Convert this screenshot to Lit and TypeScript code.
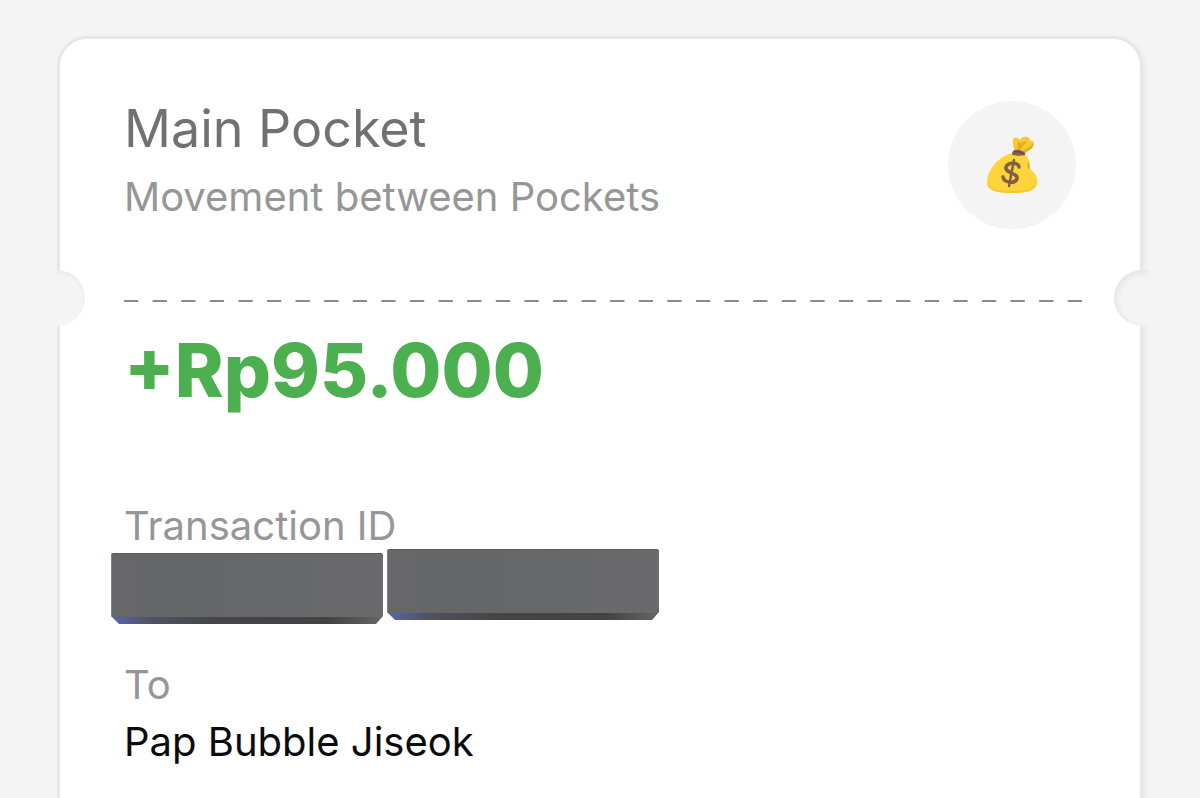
import { LitElement, html, css, svg } from "lit";
import { customElement, property } from "lit/decorators.js";

@customElement("money-bag")
export class MoneyBag extends LitElement {
  static styles = css`
    :host {
      display: grid;
      place-items: center;
      flex: none;
      width: 128px;
      height: 128px;
      border-radius: 50%;
      background: #f4f4f4;
    }
    svg {
      display: block;
      width: 56px;
      height: 60px;
    }
  `;

  render() {
    return html`<svg viewBox="0 0 56 60" role="img" aria-label="Money bag">
      ${svg`
        <path d="M31 16C28 9 28 3 31 2.500C33 2 35 4 36 5C37 2 40 1 43 2C46 2.500 46 5 46 6C49 5 50 7 50 10C49 14 45 15 41 18Z" fill="#f9c931"/>
        <path d="M35 5C33 9 33 12 34 16L36 16C37 12 40 9 43 7C40 6 38 7 36 9C35.500 8 35.500 7 35 5ZM41 18C45 15 49 13 49 9C46 12 43 13 39 16Z" fill="#e3ac22"/>
        <path d="M28 18C16 21 4 33 3 46C2 56 15 58 27 58C40 58 50 57 53 49C55 42 50 37 46 34C47 27 43 21 40 18Z" fill="#fdd43c"/>
        <path d="M43 28C45 27 46 31 46 35C44 34 43 31 43 28Z" fill="#d9b331"/>
        <path d="M3 48C4 56 15 58 27 58C40 58 50 57 53 49C46 56 36 56 25 56C14 56 7 54 3 48Z" fill="#f8c52d"/>
        <path d="M28 19C28 15 31 14 35 15C39 16 42 17 41 20C40 21 28 21 28 19Z" fill="#80604f"/>
        <path d="M30 17C33 16 37 17 40 19" fill="none" stroke="#5e4038" stroke-width="1"/>
        <g fill="none" stroke="#81613f" stroke-linecap="round">
          <path d="M35 32C34 27 24 27 22 32C20 38 35 38 33 44C31 49 20 48 19 42" stroke-width="3.500"/>
          <path d="M30 25L25 51" stroke-width="2.500"/>
        </g>
      `}
    </svg>`;
  }
}

@customElement("ticket-divider")
export class TicketDivider extends LitElement {
  static styles = css`
    :host {
      display: flex;
      align-items: center;
      justify-content: space-between;
      margin: 0 -8px 0 -3px;
    }
    .notch {
      flex: none;
      height: 56px;
    }
    .left {
      width: 28px;
      border-radius: 0 28px 28px 0;
      background: radial-gradient(circle at 0 30px, #f4f4f4 25px, #ebebeb 30px);
    }
    .right {
      width: 34px;
      border-radius: 28px 0 0 28px;
      background: radial-gradient(circle at 30px 30px, #f4f4f4 23px, #e5e5e5 31px);
    }
    .dashes {
      display: block;
      flex: 1;
      min-width: 0;
      height: 2px;
      margin: 6px 32px 0 39px;
    }
  `;

  render() {
    return html`
      <span class="notch left"></span>
      <svg class="dashes" aria-hidden="true">
        <line x1="0" y1="1" x2="100%" y2="1" pathLength="67"
          stroke="#8a8a8a" stroke-width="2" stroke-dasharray="1 1"></line>
      </svg>
      <span class="notch right"></span>
    `;
  }
}

@customElement("redacted-value")
export class RedactedValue extends LitElement {
  static styles = css`
    :host {
      display: flex;
      gap: 4px;
      margin: 0 0 0 -13px;
    }
    .bar {
      width: 272px;
      height: 72px;
    }
    .bar:first-child {
      margin-top: 4px;
    }
    svg {
      display: block;
      width: 100%;
      height: 100%;
    }
  `;

  private bar() {
    return html`<span class="bar"><svg viewBox="0 0 272 72">
      <defs>
        <linearGradient id="edge">
          <stop offset="0" stop-color="#5966b4"></stop>
          <stop offset="0.15" stop-color="#50525f"></stop>
          <stop offset="0.4" stop-color="#454547"></stop>
          <stop offset="0.8" stop-color="#424243"></stop>
          <stop offset="1" stop-color="#666"></stop>
        </linearGradient>
        <linearGradient id="face">
          <stop offset="0" stop-color="#676769"></stop>
          <stop offset="0.3" stop-color="#656668"></stop>
          <stop offset="1" stop-color="#6a6a6c"></stop>
        </linearGradient>
      </defs>
      <path d="M0 64H272L265 72H8Z" fill="url(#edge)"></path>
      <path d="M0 64V3Q0 1 2 1H270Q272 1 272 3V64L270 65H2Z" fill="url(#face)"></path>
      <path d="M0.500 64V3" stroke="#7a80b4" stroke-width="1"></path>
      <path d="M2 1.500H270" stroke="#59595d" stroke-width="1"></path>
    </svg></span>`;
  }

  render() {
    return html`${this.bar()}${this.bar()}`;
  }
}

@customElement("app-root")
export class AppRoot extends LitElement {
  @property() pocket = "Main Pocket";
  @property() kind = "Movement between Pockets";
  @property() amount = "+Rp95.000";
  @property() recipient = "Pap Bubble Jiseok";

  static styles = css`
    :host {
      display: block;
      box-sizing: border-box;
      height: 100vh;
      overflow: hidden;
      padding: 36px 57px 0;
      background: #f4f4f4;
      font-family: Inter, "Liberation Sans", sans-serif;
    }
    .card {
      box-sizing: border-box;
      min-height: 110vh;
      border: 3px solid #e7e7e7;
      border-radius: 30px;
      background: #fff;
      box-shadow: 2px 2px 5px #e9e9e9;
    }
    header {
      display: flex;
      justify-content: space-between;
      align-items: flex-start;
      padding: 62px 64px 41px;
    }
    h1, p, dl, dt, dd {
      margin: 0;
      font-weight: 400;
    }
    h1 {
      font-size: 52px;
      line-height: 56px;
      color: #717171;
    }
    .kind {
      margin-top: 20px;
      font-size: 40px;
      line-height: 40px;
      color: #969696;
    }
    .body {
      padding: 0 64px;
    }
    .amount {
      margin-top: 4px;
      font-size: 74px;
      line-height: 80px;
      font-weight: 800;
      color: #4caf50;
    }
    dl {
      margin-top: 94px;
    }
    dt, dd {
      font-size: 40px;
      line-height: 44px;
    }
    dt {
      color: #969696;
    }
    .to {
      margin-top: 39px;
    }
    .name {
      margin-top: 13px;
      color: #0b0b0b;
    }
  `;

  render() {
    return html`
      <main class="card">
        <header>
          <div class="heading">
            <h1>${this.pocket}</h1>
            <p class="kind">${this.kind}</p>
          </div>
          <money-bag></money-bag>
        </header>
        <ticket-divider></ticket-divider>
        <section class="body">
          <p class="amount">${this.amount}</p>
          <dl>
            <dt>Transaction ID</dt>
            <dd><redacted-value></redacted-value></dd>
            <dt class="to">To</dt>
            <dd class="name">${this.recipient}</dd>
          </dl>
        </section>
      </main>
    `;
  }
}
